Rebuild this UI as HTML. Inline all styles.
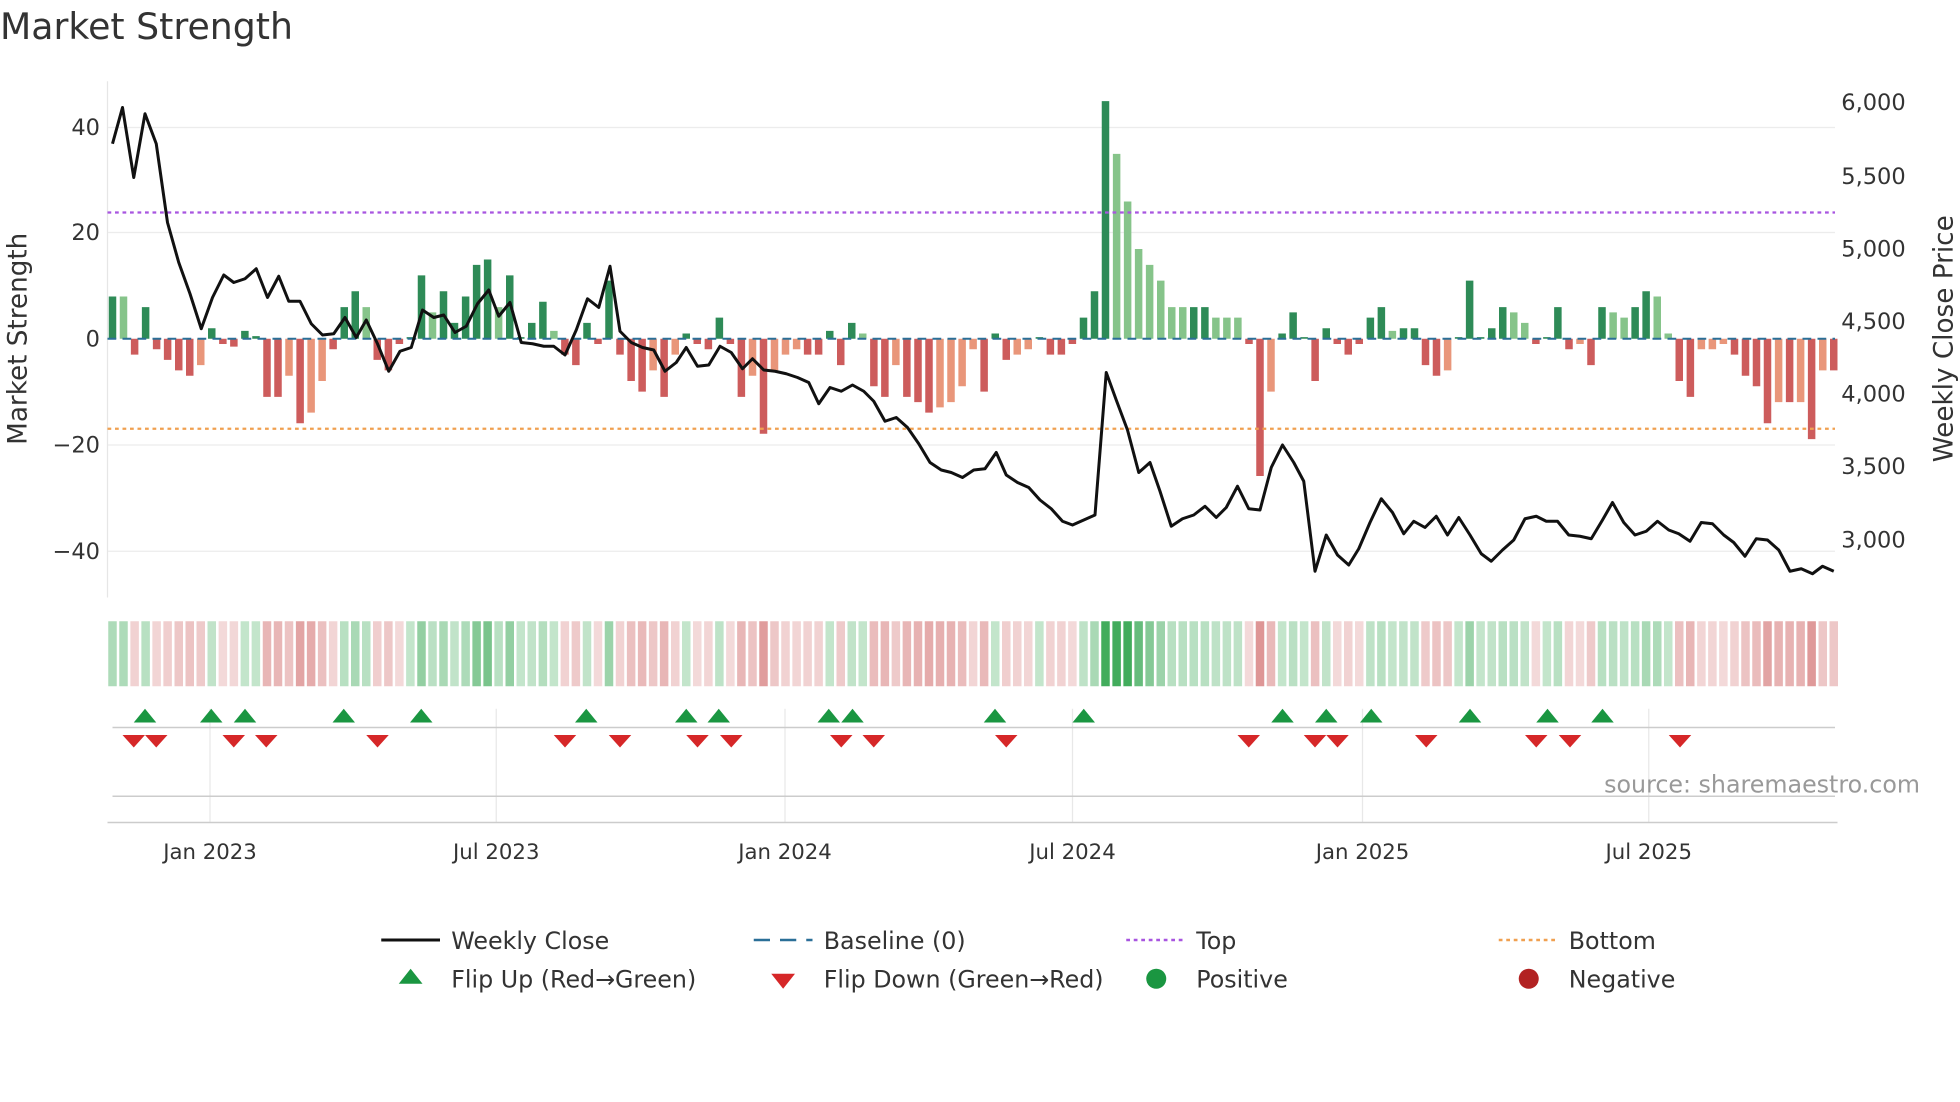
<!DOCTYPE html>
<html><head><meta charset="utf-8"><style>
html,body{margin:0;padding:0;background:#fff;}
svg{display:block;font-family:"DejaVu Sans","Liberation Sans",sans-serif;}
</style></head><body>
<svg id="s" width="1960" height="1102" viewBox="0 0 1568 881.6" xmlns="http://www.w3.org/2000/svg">
<rect width="1568" height="882" fill="#fff"/>
<text x="0" y="31" font-size="29" fill="#333">Market Strength</text>
<g stroke="#ececec" stroke-width="1">
<line x1="86" y1="102" x2="1468" y2="102"/><line x1="86" y1="186" x2="1468" y2="186"/>
<line x1="86" y1="356" x2="1468" y2="356"/><line x1="86" y1="441" x2="1468" y2="441"/>
</g>
<line x1="86" y1="65" x2="86" y2="478" stroke="#e6e6e6"/>
<g font-size="18" fill="#333" text-anchor="end">
<text x="80" y="108">40</text><text x="80" y="192">20</text><text x="80" y="277">0</text>
<text x="80" y="362">−20</text><text x="80" y="447">−40</text>
</g>
<g font-size="18" fill="#333" text-anchor="start">
<text x="1473" y="88">6,000</text><text x="1473" y="147">5,500</text><text x="1473" y="205">5,000</text>
<text x="1473" y="263">4,500</text><text x="1473" y="321">4,000</text><text x="1473" y="379">3,500</text><text x="1473" y="438">3,000</text>
</g>
<text transform="translate(21,271) rotate(-90)" font-size="21" fill="#333" text-anchor="middle">Market Strength</text>
<text transform="translate(1562,271) rotate(-90)" font-size="21" fill="#333" text-anchor="middle">Weekly Close Price</text>
<g id="bars"></g>
<line x1="86" y1="271" x2="1468" y2="271" stroke="#2a6f97" stroke-width="1.6" stroke-dasharray="7,5"/>
<line x1="86" y1="170" x2="1468" y2="170" stroke="#a855e0" stroke-width="1.8" stroke-dasharray="3,3"/>
<line x1="86" y1="343" x2="1468" y2="343" stroke="#f0a050" stroke-width="1.8" stroke-dasharray="3,3"/>
<polyline id="price" fill="none" stroke="#111" stroke-width="2.4" stroke-linejoin="round"/>
<g id="strip"></g>
<g stroke="#e8e8e8"><line x1="168" y1="567" x2="168" y2="658"/><line x1="397" y1="567" x2="397" y2="658"/><line x1="628" y1="567" x2="628" y2="658"/><line x1="858" y1="567" x2="858" y2="658"/><line x1="1090" y1="567" x2="1090" y2="658"/><line x1="1319" y1="567" x2="1319" y2="658"/></g>
<line x1="90" y1="582" x2="1468" y2="582" stroke="#ccc" stroke-width="1.2"/>
<line x1="90" y1="637" x2="1468" y2="637" stroke="#ccc" stroke-width="1.2"/>
<line x1="86" y1="658" x2="1470" y2="658" stroke="#ccc" stroke-width="1.2"/>
<g id="tri"></g>
<text x="1536" y="634" font-size="19" fill="#999" text-anchor="end">source: sharemaestro.com</text>
<g font-size="17" fill="#333" text-anchor="middle">
<text x="168" y="687">Jan 2023</text><text x="397" y="687">Jul 2023</text><text x="628" y="687">Jan 2024</text>
<text x="858" y="687">Jul 2024</text><text x="1090" y="687">Jan 2025</text><text x="1319" y="687">Jul 2025</text>
</g>
<g font-size="19" fill="#333">
<line x1="305" y1="752" x2="352" y2="752" stroke="#111" stroke-width="2.4"/><text x="361" y="759">Weekly Close</text>
<line x1="603" y1="752" x2="650" y2="752" stroke="#2a6f97" stroke-width="2" stroke-dasharray="13,8"/><text x="659" y="759">Baseline (0)</text>
<line x1="901" y1="752" x2="948" y2="752" stroke="#a855e0" stroke-width="2" stroke-dasharray="3,3"/><text x="957" y="759">Top</text>
<line x1="1199" y1="752" x2="1246" y2="752" stroke="#f0a050" stroke-width="2" stroke-dasharray="3,3"/><text x="1255" y="759">Bottom</text>
<polygon points="319,787 338,787 328.5,775" fill="#1a9641"/><text x="361" y="790">Flip Up (Red→Green)</text>
<polygon points="617,779 636,779 626.5,791" fill="#d62728"/><text x="659" y="790">Flip Down (Green→Red)</text>
<circle cx="925" cy="783" r="8" fill="#1a9641"/><text x="957" y="790">Positive</text>
<circle cx="1223" cy="783" r="8" fill="#b22222"/><text x="1255" y="790">Negative</text>
</g>
</svg>
<script>
var ns="http://www.w3.org/2000/svg";
var v=[[8,0],[8,1],[-3,0],[6,0],[-2,0],[-4,0],[-6,0],[-7,0],[-5,1],[2,0],[-1,0],[-1.5,0],[1.5,0],[0.5,0],[-11,0],[-11,0],[-7,1],[-16,0],[-14,1],[-8,1],[-2,0],[6,0],[9,0],[6,1],[-4,0],[-6,0],[-1,0],[0.3,0],[12,0],[5,1],[9,0],[3,0],[8,0],[14,0],[15,0],[6,1],[12,0],[0.3,0],[3,0],[7,0],[1.5,1],[-3,0],[-5,0],[3,0],[-1,0],[11,0],[-3,0],[-8,0],[-10,0],[-6,1],[-11,0],[-3,1],[1,0],[-1,0],[-2,0],[4,0],[-1,0],[-11,0],[-7,1],[-18,0],[-6,1],[-3,1],[-2,1],[-3,0],[-3,0],[1.5,0],[-5,0],[3,0],[1,1],[-9,0],[-11,0],[-5,1],[-11,0],[-12,0],[-14,0],[-13,1],[-12,1],[-9,1],[-2,1],[-10,0],[1,0],[-4,0],[-3,1],[-2,1],[0.3,0],[-3,0],[-3,0],[-1,0],[4,0],[9,0],[45,0],[35,1],[26,1],[17,1],[14,1],[11,1],[6,1],[6,1],[6,0],[6,0],[4,1],[4,1],[4,1],[-1,0],[-26,0],[-10,1],[1,0],[5,0],[0.3,0],[-8,0],[2,0],[-1,0],[-3,0],[-1,0],[4,0],[6,0],[1.5,1],[2,0],[2,0],[-5,0],[-7,0],[-6,1],[0.3,0],[11,0],[0.3,0],[2,0],[6,0],[5,1],[3,1],[-1,0],[0.3,0],[6,0],[-2,0],[-1,1],[-5,0],[6,0],[5,1],[4,1],[6,0],[9,0],[8,1],[1,1],[-8,0],[-11,0],[-2,1],[-2,1],[-1,1],[-3,0],[-7,0],[-9,0],[-16,0],[-12,1],[-12,0],[-12,1],[-19,0],[-6,1],[-6,0]];
var bars=document.getElementById("bars"),strip=document.getElementById("strip");
var dx=(1467-90)/(v.length-1);
function R(p,a){var e=document.createElementNS(ns,"rect");for(var k in a)e.setAttribute(k,a[k]);p.appendChild(e);}
for(var i=0;i<v.length;i++){var x=90+i*dx,val=v[i][0],l=v[i][1];
var h=Math.abs(val)*4.225,y=val>0?271-h:271;
var c=val>0?(l?"#86c48a":"#2e8b57"):(l?"#e9967a":"#cd5c5c");
R(bars,{x:(x-3).toFixed(1),y:y.toFixed(1),width:6,height:Math.max(h,0.8).toFixed(1),fill:c});
var m=Math.min(Math.abs(val)/20,1);
var sc=val>0?"rgba(40,160,70,"+(0.28+0.6*m*m).toFixed(2)+")":"rgba(200,80,80,"+(0.2+0.4*m).toFixed(2)+")";
R(strip,{x:(x-3.4).toFixed(1),y:497,width:6.8,height:52,fill:sc});}
var p=[[90,115],[98,86],[107,142],[116,91],[125,115],[134,178],[143,210],[152,235],[161,263],[170,238],[179,220],[187,226],[196,223],[205,215],[214,238],[223,221],[231,241],[240,241],[249,259],[258,268],[267,267],[276,254],[285,270],[293,256],[302,275],[311,297],[320,281],[329,278],[338,248],[347,254],[355,252],[364,266],[373,261],[382,243],[391,232],[399,253],[408,242],[417,274],[426,275],[435,277],[443,277],[452,284],[461,264],[470,239],[479,246],[488,213],[496,265],[505,274],[514,278],[523,280],[532,297],[541,290],[549,278],[558,293],[567,292],[576,277],[585,282],[594,295],[602,287],[611,296],[620,297],[629,299],[638,302],[647,306],[655,323],[664,310],[673,313],[682,308],[691,313],[699,321],[708,337],[717,334],[726,342],[735,355],[744,370],[753,376],[761,378],[770,382],[779,376],[788,375],[797,362],[805,380],[814,386],[823,390],[832,400],[841,407],[850,417],[858,420],[867,416],[876,412],[885,298],[893,320],[902,344],[911,378],[920,370],[928,393],[937,421],[946,415],[955,412],[964,405],[973,414],[981,406],[990,389],[999,407],[1008,408],[1017,374],[1026,356],[1035,370],[1043,385],[1052,457],[1061,428],[1070,444],[1079,452],[1087,439],[1096,418],[1105,399],[1114,410],[1123,427],[1131,417],[1140,422],[1149,413],[1158,428],[1167,414],[1176,428],[1185,443],[1193,449],[1202,440],[1211,432],[1220,415],[1229,413],[1237,417],[1246,417],[1255,428],[1264,429],[1273,431],[1282,416],[1290,402],[1299,418],[1308,428],[1317,425],[1326,417],[1335,424],[1343,427],[1352,433],[1361,418],[1370,419],[1379,428],[1387,434],[1396,445],[1405,431],[1414,432],[1423,440],[1432,457],[1441,455],[1450,459],[1458,453],[1467,457]];
document.getElementById("price").setAttribute("points",p.map(function(a){return a.join(",")}).join(" "));
var tri=document.getElementById("tri");
[116,169,196,275,337,469,549,575,663,682,796,867,1026,1061,1097,1176,1238,1282].forEach(function(x){var e=document.createElementNS(ns,"polygon");e.setAttribute("points",(x-9)+",578 "+(x+9)+",578 "+x+",567");e.setAttribute("fill","#1a9641");tri.appendChild(e);});
[107,125,187,213,302,452,496,558,585,673,699,805,999,1052,1070,1141,1229,1256,1344].forEach(function(x){var e=document.createElementNS(ns,"polygon");e.setAttribute("points",(x-9)+",588 "+(x+9)+",588 "+x+",598");e.setAttribute("fill","#d62728");tri.appendChild(e);});
</script>
</body></html>
